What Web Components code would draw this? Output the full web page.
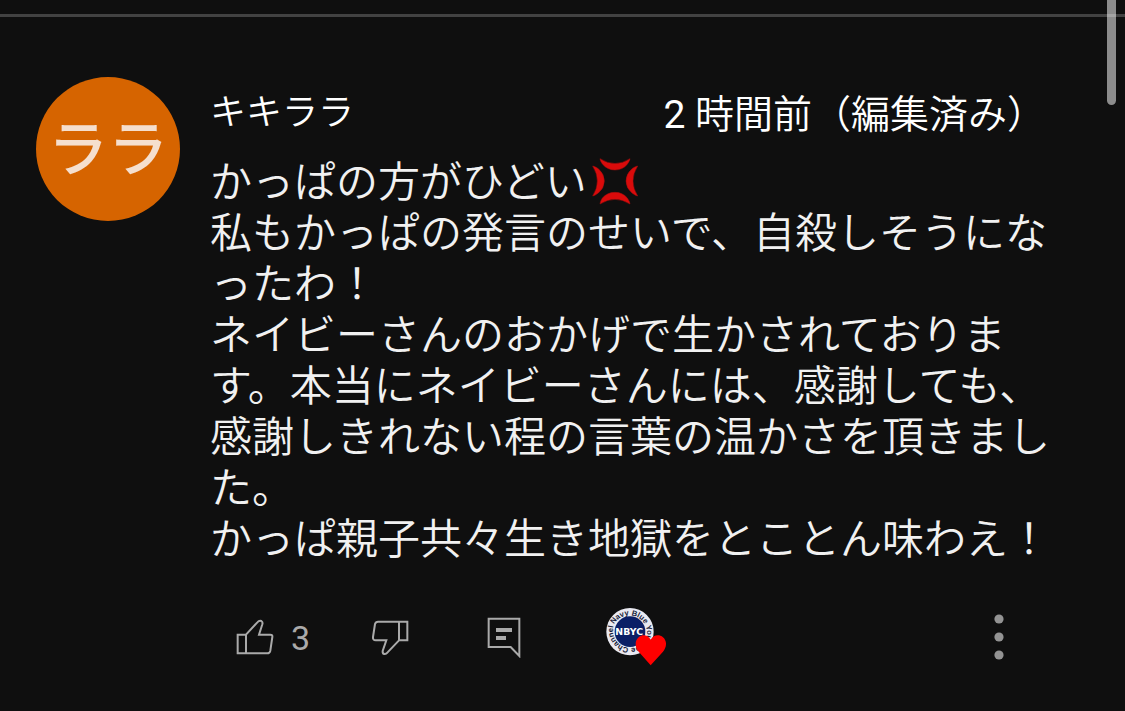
<!DOCTYPE html>
<html lang="ja">
<head>
<meta charset="utf-8">
<meta name="viewport" content="width=device-width, initial-scale=1">
<title>コメント</title>
<style>
html, body { margin: 0; background: #0f0f0f; }
body { color: #f1f1f1; font-family: Roboto, "Noto Sans CJK JP", sans-serif; font-weight: 350; overflow: hidden; }
time b { font-weight: 400; }
</style>
</head>
<body>
<comment-panel>
  <comment-item>
    <user-avatar slot="avatar">ララ</user-avatar>
    <span slot="author">キキララ</span>
    <time slot="time"><b>2</b> 時間前（編集済み）</time>
    <p slot="text" style="margin:0">かっぱの方がひどい<anger-mark></anger-mark><br>私もかっぱの発言のせいで、自殺しそうになったわ！<br>ネイビーさんのおかげで生かされております。本当にネイビーさんには、感謝しても、感謝しきれない程の言葉の温かさを頂きました。<br>かっぱ親子共々生き地獄をとことん味わえ！</p>
    <comment-actions slot="actions">3</comment-actions>
  </comment-item>
</comment-panel>
<script>
function define(name, html) {
  const template = document.createElement('template');
  template.innerHTML = html;
  customElements.define(name, class extends HTMLElement {
    constructor() {
      super();
      this.attachShadow({ mode: 'open' }).append(template.content.cloneNode(true));
    }
  });
}

define('comment-panel', `
<style>
:host { display: block; position: relative; padding-top: 14px; }
hr { margin: 0; border: 0; height: 3px; background: #424242; }
.thumb { position: absolute; top: 0; right: 9px; width: 9px; height: 105px; border-radius: 0 0 5px 5px; background: rgba(255,255,255,.52); }
</style>
<hr>
<slot></slot>
<div class="thumb"></div>`);

define('comment-item', `
<style>
:host { display: grid; grid-template-columns: 144px minmax(0, 1fr); column-gap: 30px; padding: 60px 75px 24px 36px; }
header { display: flex; justify-content: space-between; align-items: center; height: 72px; margin-bottom: 8px; padding-right: 4px; color: #fff; }
.author { font-size: 36px; line-height: 72px; }
.time { font-size: 39px; line-height: 72px; padding-top: 4px; }
.text { font-size: 42px; line-height: 51px; line-break: normal; }
.actions { margin-top: 42px; }
</style>
<slot name="avatar"></slot>
<article>
  <header><div class="author"><slot name="author"></slot></div><div class="time"><slot name="time"></slot></div></header>
  <div class="text"><slot name="text"></slot></div>
  <div class="actions"><slot name="actions"></slot></div>
</article>`);

define('user-avatar', `
<style>
:host { display: flex; align-items: center; justify-content: center; box-sizing: border-box; width: 144px; height: 144px; padding-top: 4px; border-radius: 50%; background: #d66400; color: #f5dfce; font-size: 60px; line-height: 60px; font-weight: 500; }
</style>
<slot></slot>`);

define('anger-mark', `
<style>
:host { display: inline-block; width: 48px; height: 48px; margin: -6px 0 0 4px; padding-bottom: 3px; vertical-align: middle; }
svg { display: block; width: 48px; height: 48px; }
</style>
<svg viewBox="64 39 144 144" fill="#d90b0b" stroke="#a80d0d" stroke-width="1.5" stroke-linejoin="round" role="img" aria-label="怒り">
  <path d="M91 44Q136 73 181 44Q181 49 173 61Q159 78 136 78Q113 78 98 60Q91 50 91 44Z"/>
  <path d="M91 180Q136 152 181 180Q181 174 173 162Q159 145 136 145Q113 145 98 162Q91 173 91 180Z"/>
  <path d="M69 66Q97 111 69 156Q74 156 86 147Q104 132 104 111Q104 90 86 74Q74 66 69 66Z"/>
  <path d="M204 66Q176 111 204 156Q199 156 187 147Q169 132 169 111Q169 90 187 74Q199 66 204 66Z"/>
</svg>`);

define('hearted-badge', `
<style>
:host { display: block; width: 60px; height: 60px; }
svg { display: block; width: 60px; height: 60px; font-family: "Liberation Sans", sans-serif; font-weight: 700; }
.mark { font-family: "DejaVu Sans", sans-serif; }
</style>
<svg viewBox="48 35 180 180" role="img" aria-label="NBYC">
  <defs><path id="ring" d="M72 87A53 53 0 0 1 168 131A53 53 0 0 1 72 87"/></defs>
  <circle cx="120" cy="109" r="71" fill="#e9e9f1"/>
  <circle cx="120" cy="109" r="46" fill="#0b1f66"/>
  <text font-size="23" fill="#171c38"><textPath href="#ring">Navy Blue YouTube Channel</textPath></text>
  <text class="mark" x="76" y="118" font-size="28" fill="#fff">NBYC</text>
  <path fill="#f00" d="M182 210L146 169C135 156 133 137 146 126C158 116 174 119 182 133C190 119 207 116 219 126C232 137 230 156 219 169Z"/>
</svg>`);

define('comment-actions', `
<style>
:host { display: grid; grid-template-columns: 135px 116px 119px 1fr auto; align-items: center; height: 60px; padding-left: 26px; padding-right: 46px; color: #aaa; }
button { display: flex; align-items: center; justify-content: flex-start; gap: 17px; padding: 0; margin: 0; border: 0; background: none; color: inherit; font: inherit; cursor: pointer; }
svg { display: block; fill: none; stroke: currentColor; stroke-width: 6; }
.count { font-size: 34px; line-height: 40px; font-weight: 400; padding-top: 2px; }
.solid { fill: currentColor; stroke: none; }
.dots { color: #939393; }
</style>
<button aria-label="高評価">
  <svg width="38" height="36" viewBox="48 51 114 108"><path d="M53 98H78V154H53ZM78 98L112 61Q118 54 124 57Q129 60 127 67L117 98H151Q158 98 157 105L151 146Q149 154 142 154H78"/></svg>
  <span class="count"><slot></slot></span>
</button>
<button aria-label="低評価">
  <svg width="38" height="37" viewBox="453 57 114 111"><path d="M537 65H562V121H537ZM537 65H474Q467 65 465 72L459 111Q458 121 467 121H499L488 153Q487 161 493 162Q498 163 502 158L537 121"/></svg>
</button>
<button aria-label="返信">
  <svg width="34" height="41" viewBox="801 48 102 123"><path d="M806 53H898V165L872 138H806Z"/><path class="solid" d="M828 81H876V93H828ZM828 105H858V117H828Z"/></svg>
</button>
<hearted-badge></hearted-badge>
<button class="dots" aria-label="その他">
  <svg width="10" height="46" viewBox="0 0 10 46"><g class="solid"><circle cx="5" cy="5" r="4.6"/><circle cx="5" cy="23" r="4.6"/><circle cx="5" cy="41" r="4.6"/></g></svg>
</button>`);
</script>
</body>
</html>
